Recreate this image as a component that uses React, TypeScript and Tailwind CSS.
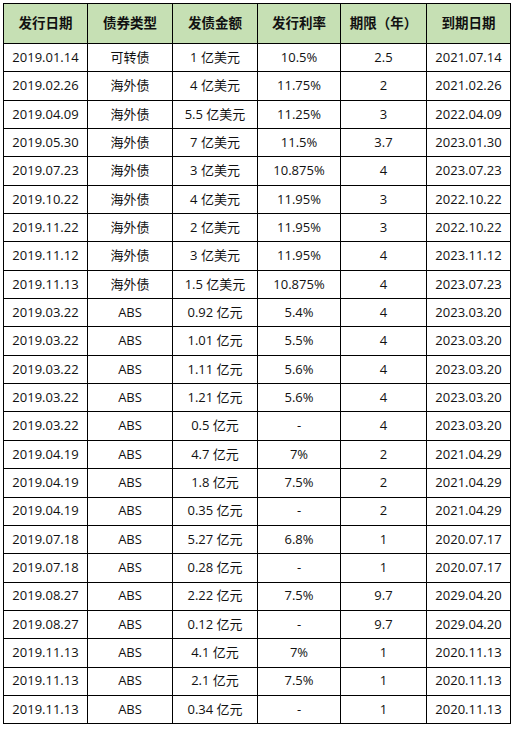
import React from "react";

const headers = ["发行日期", "债券类型", "发债金额", "发行利率", "期限（年）", "到期日期"];

const rows: string[][] = [
  ["2019.01.14", "可转债", "1 亿美元", "10.5%", "2.5", "2021.07.14"],
  ["2019.02.26", "海外债", "4 亿美元", "11.75%", "2", "2021.02.26"],
  ["2019.04.09", "海外债", "5.5 亿美元", "11.25%", "3", "2022.04.09"],
  ["2019.05.30", "海外债", "7 亿美元", "11.5%", "3.7", "2023.01.30"],
  ["2019.07.23", "海外债", "3 亿美元", "10.875%", "4", "2023.07.23"],
  ["2019.10.22", "海外债", "4 亿美元", "11.95%", "3", "2022.10.22"],
  ["2019.11.22", "海外债", "2 亿美元", "11.95%", "3", "2022.10.22"],
  ["2019.11.12", "海外债", "3 亿美元", "11.95%", "4", "2023.11.12"],
  ["2019.11.13", "海外债", "1.5 亿美元", "10.875%", "4", "2023.07.23"],
  ["2019.03.22", "ABS", "0.92 亿元", "5.4%", "4", "2023.03.20"],
  ["2019.03.22", "ABS", "1.01 亿元", "5.5%", "4", "2023.03.20"],
  ["2019.03.22", "ABS", "1.11 亿元", "5.6%", "4", "2023.03.20"],
  ["2019.03.22", "ABS", "1.21 亿元", "5.6%", "4", "2023.03.20"],
  ["2019.03.22", "ABS", "0.5 亿元", "-", "4", "2023.03.20"],
  ["2019.04.19", "ABS", "4.7 亿元", "7%", "2", "2021.04.29"],
  ["2019.04.19", "ABS", "1.8 亿元", "7.5%", "2", "2021.04.29"],
  ["2019.04.19", "ABS", "0.35 亿元", "-", "2", "2021.04.29"],
  ["2019.07.18", "ABS", "5.27 亿元", "6.8%", "1", "2020.07.17"],
  ["2019.07.18", "ABS", "0.28 亿元", "-", "1", "2020.07.17"],
  ["2019.08.27", "ABS", "2.22 亿元", "7.5%", "9.7", "2029.04.20"],
  ["2019.08.27", "ABS", "0.12 亿元", "-", "9.7", "2029.04.20"],
  ["2019.11.13", "ABS", "4.1 亿元", "7%", "1", "2020.11.13"],
  ["2019.11.13", "ABS", "2.1 亿元", "7.5%", "1", "2020.11.13"],
  ["2019.11.13", "ABS", "0.34 亿元", "-", "1", "2020.11.13"],
];

export default function App() {
  return (
    <div className="w-[515px] h-[729px] bg-white overflow-hidden pt-[3px] pl-[3px] font-['Open_Sans','Noto_Sans_CJK_SC',sans-serif] text-[#111]">
      <div className="grid grid-cols-[84px_85px_85px_83px_86px_84px] border-l border-t border-black w-fit">
        {/* header */}
        {headers.map((h) => (
          <div
            key={h}
            className="h-[40px] bg-[#c6e0b4] border-r border-b border-black flex items-center justify-center text-[13.5px] font-bold"
          >
            {h}
          </div>
        ))}
        {/* body */}
        {rows.map((r, i) =>
          r.map((c, j) => (
            <div
              key={i + "-" + j}
              className="h-[28.35px] border-r border-b border-black flex items-center justify-center text-[13px]"
            >
              {c}
            </div>
          ))
        )}
      </div>
    </div>
  );
}
